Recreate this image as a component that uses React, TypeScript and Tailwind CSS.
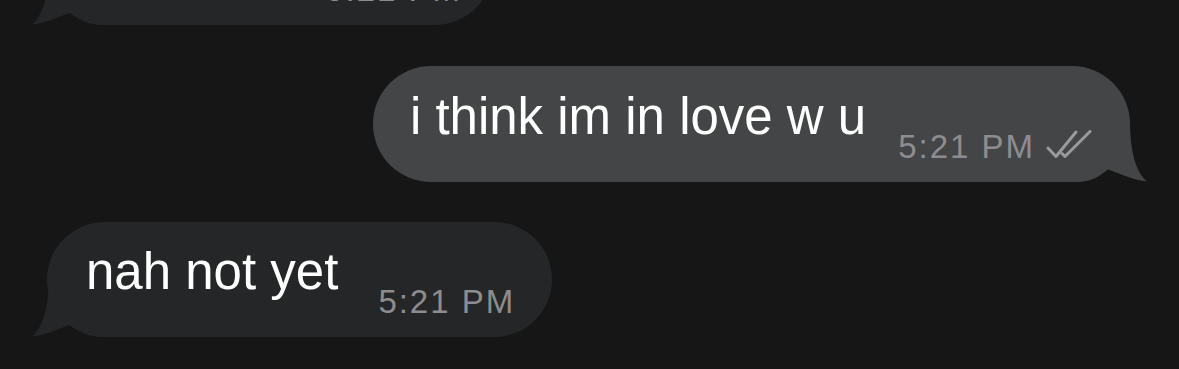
import React from 'react'

const font = { fontFamily: '"Liberation Sans", Arial, sans-serif' }

function Tail({ color, side }: { color: string; side: 'left' | 'right' }) {
  return (
    <svg
      width="80"
      height="64"
      viewBox="0 0 80 64"
      className={
        side === 'right'
          ? 'absolute bottom-0 right-[-17px]'
          : 'absolute bottom-0 left-[-15px] -scale-x-100'
      }
    >
      <path
        d="M0,64 L0,2 L63,2 C63,32 68,53 80,63.5 C71,63 58,58 40,51 C33,59 23,64 10,64 Z"
        fill={color}
      />
    </svg>
  )
}

function Checks() {
  return (
    <svg width="48" height="28" viewBox="0 0 48 28" fill="none" className="ml-[9px] mb-[9px]">
      <path d="M4,18 L12,26.5 L32,2" stroke="#9a9a9c" strokeWidth="3" strokeLinecap="round" strokeLinejoin="round" />
      <path d="M18,23.5 L21,26.5 L46,1.5" stroke="#9a9a9c" strokeWidth="3" strokeLinecap="round" strokeLinejoin="round" />
    </svg>
  )
}

function Time({ children }: { children: React.ReactNode }) {
  return (
    <span className="text-[33px] leading-[40px] tracking-[0.06em] text-[#8d8d8f] whitespace-nowrap">
      {children}
    </span>
  )
}

export default function App() {
  return (
    <div className="w-full h-[369px] overflow-hidden bg-[#161616] flex flex-col" style={font}>
      {/* previous incoming message, mostly off screen */}
      <div className="-mt-[91px] pl-[47px]">
        <div className="relative w-[446px] h-[116px] rounded-[58px] bg-[#252627] flex items-end justify-end pr-[31px] pb-[15px]">
          <Tail color="#252627" side="left" />
          <span className="relative">
            <Time>5:21 PM</Time>
          </span>
        </div>
      </div>

      {/* outgoing */}
      <div className="mt-[41px] flex justify-end pr-[49px]">
        <div className="relative rounded-[58px] bg-[#444547] flex items-end pl-[37px] pr-[38px] pt-[21px] pb-[15px]">
          <Tail color="#444547" side="right" />
          <span className="relative text-[51px] leading-[60px] text-white mb-[20px] whitespace-nowrap">
            i think im in love w u
          </span>
          <span className="relative ml-[32px] flex items-end">
            <Time>5:21 PM</Time>
            <Checks />
          </span>
        </div>
      </div>

      {/* incoming */}
      <div className="mt-[40px] pl-[47px] flex">
        <div className="relative rounded-[58px] bg-[#252627] flex items-end pl-[39px] pr-[37px] pt-[20px] pb-[15px]">
          <Tail color="#252627" side="left" />
          <span className="relative text-[51px] leading-[60px] text-white mb-[20px] whitespace-nowrap">
            nah not yet
          </span>
          <span className="relative ml-[40px]">
            <Time>5:21 PM</Time>
          </span>
        </div>
      </div>
    </div>
  )
}
